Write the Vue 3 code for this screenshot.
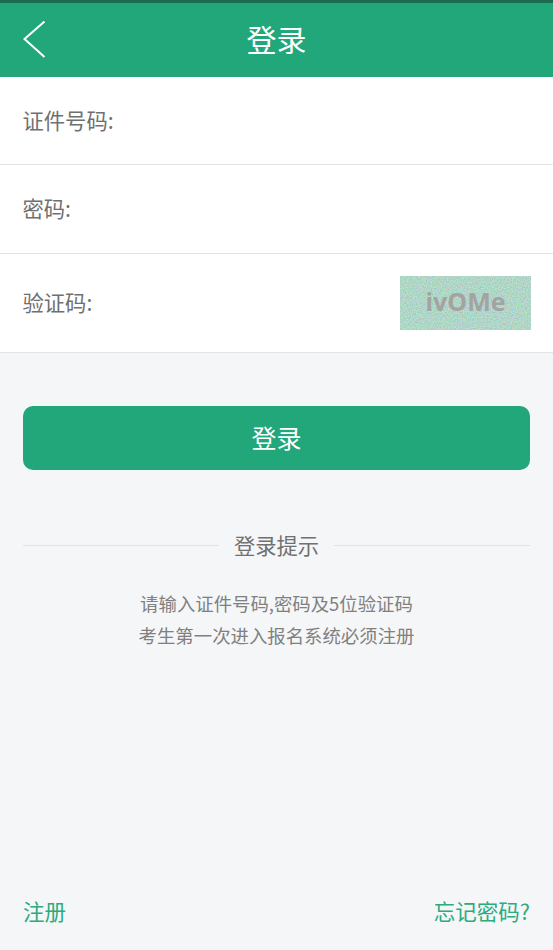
<script setup>
const fields = [
  { label: '证件号码:', kind: 'id' },
  { label: '密码:', kind: 'pwd' },
]
</script>

<template>
  <div class="page">
    <header class="bar">
      <svg class="back" width="24" height="40" viewBox="0 0 24 40" aria-hidden="true">
        <path d="M22.5 2.5 L2.5 20 L22.5 38" fill="none" stroke="#fff" stroke-width="2" />
      </svg>
      <h1 class="title">登录</h1>
    </header>

    <section class="form">
      <div v-for="f in fields" :key="f.kind" class="row" :class="'row-' + f.kind"><span class="label">{{ f.label }}</span></div>
      <div class="row row-code">
        <span class="label">验证码:</span>
        <div class="captcha">
          <svg class="noise" width="131" height="54" aria-hidden="true">
            <filter id="grain" x="0" y="0" width="100%" height="100%" color-interpolation-filters="sRGB">
              <feTurbulence type="fractalNoise" baseFrequency="0.8" numOctaves="2" seed="4" />
              <feColorMatrix type="matrix" values="0.3 0 0 0 0.54  0 0.3 0 0 0.69  0 0 0.3 0 0.63  0 0 0 0 1" />
              <feGaussianBlur stdDeviation="0.35" />
            </filter>
            <rect width="131" height="54" filter="url(#grain)" />
          </svg>
          <span class="code">ivOMe</span>
        </div>
      </div>
    </section>

    <button class="submit" type="button"><span class="submit-text">登录</span></button>

    <div class="divider">
      <span class="line"></span>
      <span class="divider-text">登录提示</span>
      <span class="line"></span>
    </div>

    <div class="hint">
      <p>请输入证件号码,密码及5位验证码</p>
      <p>考生第一次进入报名系统必须注册</p>
    </div>

    <footer class="foot">
      <span>注册</span>
      <span>忘记密码?</span>
    </footer>
  </div>
</template>

<style>
html, body { margin: 0; padding: 0; background: #f5f6f8; }
</style>

<style scoped>
.page {
  width: 553px;
  height: 950px;
  display: flex;
  flex-direction: column;
  background: #f5f6f8;
  font-family: "Noto Sans CJK SC", "Noto Sans", sans-serif;
  overflow: hidden;
}
.bar {
  height: 74px;
  border-top: 3px solid #1b6b52;
  background: #21a77a;
  display: flex;
  align-items: center;
  justify-content: center;
  position: relative;
}
.back { position: absolute; left: 22px; top: 16px; }
.title { margin: -5px 0 0; font-size: 30px; font-weight: 400; color: #fff; line-height: 70px; }
.form { background: #fff; }
.row {
  display: flex;
  align-items: center;
  justify-content: space-between;
  padding: 0 22px 0 22.5px;
  font-size: 21.3px;
  color: #707070;
  border-bottom: 1px solid #e3e3e3;
  box-sizing: border-box;
}
.label { margin-top: -3px; }
.row-id { height: 88px; }
.row-pwd { height: 89px; }
.row-code { height: 99px; }
.captcha { position: relative; width: 131px; height: 54px; margin-top: -1px; }
.noise { display: block; }
.code {
  position: absolute;
  inset: 0 0 3px;
  display: flex;
  align-items: center;
  justify-content: center;
  font-family: "Open Sans", sans-serif;
  font-size: 25px;
  font-weight: 700;
  color: #a3a3a3;
}
.submit {
  margin: 53px 23px 0;
  height: 64px;
  border: 0;
  border-radius: 10px;
  background: #21a77a;
  color: #fff;
  font: inherit;
  font-size: 25px;
}
.submit-text { display: block; margin-top: -3px; }
.divider {
  margin: 58px 23px 0;
  height: 34px;
  display: flex;
  align-items: center;
  gap: 15px;
}
.line { flex: 1; height: 1px; background: #e3e3e3; }
.divider-text { font-size: 21.3px; color: #707070; margin-top: -1px; }
.hint {
  margin-top: 25px;
  text-align: center;
  font-size: 18.4px;
  line-height: 32px;
  color: #808080;
}
.hint p { margin: 0; }
.foot {
  margin-top: auto;
  padding: 0 23px;
  height: 55px;
  display: flex;
  justify-content: space-between;
  font-size: 21.5px;
  line-height: 31px;
  color: #2bab80;
}
</style>
